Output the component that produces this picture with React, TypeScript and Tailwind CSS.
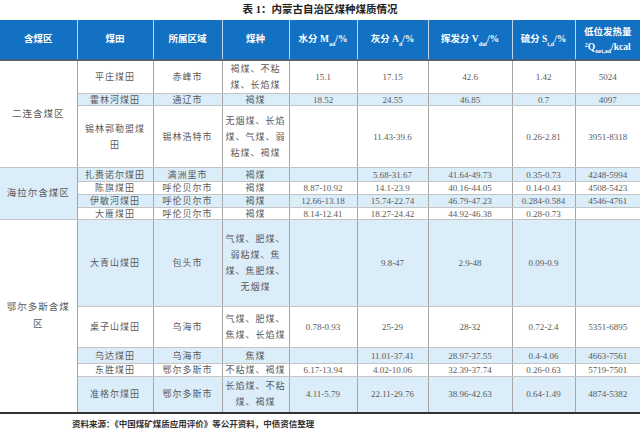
import React from "react";

type Row = {
  field: React.ReactNode;
  city: string;
  kind: React.ReactNode;
  m: string;
  a: string;
  v: string;
  s: string;
  q: string;
  blue: boolean;
  h: string;
};

// 含煤区 cells span several rows
const regions: Record<number, { name: React.ReactNode; span: number; blue: boolean }> = {
  0: { name: "二连含煤区", span: 3, blue: false },
  3: { name: "海拉尔含煤区", span: 4, blue: true },
  7: {
    name: (
      <>
        鄂尔多斯含煤
        <br />区
      </>
    ),
    span: 5,
    blue: false,
  },
};

const rows: Row[] = [
  { field: "平庄煤田", city: "赤峰市", kind: <>褐煤、不粘<br />煤、长焰煤</>, m: "15.1", a: "17.15", v: "42.6", s: "1.42", q: "5024", blue: false, h: "h-[32px]" },
  { field: "霍林河煤田", city: "通辽市", kind: "褐煤", m: "18.52", a: "24.55", v: "46.85", s: "0.7", q: "4097", blue: true, h: "h-[12px]" },
  { field: <>锡林郭勒盟煤<br />田</>, city: "锡林浩特市", kind: <>无烟煤、长焰<br />煤、气煤、弱<br />粘煤、褐煤</>, m: "", a: "11.43-39.6", v: "", s: "0.26-2.81", q: "3951-8318", blue: false, h: "h-[62px]" },
  { field: "扎赉诺尔煤田", city: "满洲里市", kind: "褐煤", m: "", a: "5.68-31.67", v: "41.64-49.73", s: "0.35-0.73", q: "4248-5994", blue: true, h: "h-[14px]" },
  { field: "陈旗煤田", city: "呼伦贝尔市", kind: "褐煤", m: "8.87-10.92", a: "14.1-23.9", v: "40.16-44.05", s: "0.14-0.43", q: "4508-5423", blue: false, h: "h-[13px]" },
  { field: "伊敏河煤田", city: "呼伦贝尔市", kind: "褐煤", m: "12.66-13.18", a: "15.74-22.74", v: "46.79-47.23", s: "0.284-0.584", q: "4546-4761", blue: true, h: "h-[13px]" },
  { field: "大雁煤田", city: "呼伦贝尔市", kind: "褐煤", m: "8.14-12.41", a: "18.27-24.42", v: "44.92-46.38", s: "0.28-0.73", q: "", blue: false, h: "h-[12px]" },
  { field: "大青山煤田", city: "包头市", kind: <>气煤、肥煤、<br />弱粘煤、焦<br />煤、焦肥煤、<br />无烟煤</>, m: "", a: "9.8-47", v: "2.9-48", s: "0.09-0.9", q: "", blue: true, h: "h-[87px]" },
  { field: "桌子山煤田", city: "乌海市", kind: <>气煤、肥煤、<br />焦煤、长焰煤</>, m: "0.78-0.93", a: "25-29", v: "28-32", s: "0.72-2.4", q: "5351-6895", blue: false, h: "h-[41px]" },
  { field: "乌达煤田", city: "乌海市", kind: "焦煤", m: "", a: "11.01-37.41", v: "28.97-37.55", s: "0.4-4.06", q: "4663-7561", blue: true, h: "h-[16px]" },
  { field: "东胜煤田", city: "鄂尔多斯市", kind: "不粘煤、褐煤", m: "6.17-13.94", a: "4.02-10.06", v: "32.39-37.74", s: "0.26-0.63", q: "5719-7501", blue: false, h: "h-[13px]" },
  { field: "准格尔煤田", city: "鄂尔多斯市", kind: <>长焰煤、不粘<br />煤、褐煤</>, m: "4.11-5.79", a: "22.11-29.76", v: "38.96-42.63", s: "0.64-1.49", q: "4874-5382", blue: true, h: "h-[36px]" },
];

function Sub({ children }: { children: React.ReactNode }) {
  return <sub className="text-[6px] align-[-2px] leading-none">{children}</sub>;
}

export default function App() {
  const th = "border-x border-[#c7d7ea] font-bold text-white text-[9.5px] leading-[15px] text-center align-middle px-0";
  const td = "border-x border-[#a6a6a6] border-y border-y-[#c4c4c4] text-center align-middle p-0 leading-[10px]";

  return (
    <div className="w-[640px] h-[429px] overflow-hidden bg-white font-['Liberation_Serif','Noto_Sans_CJK_SC',serif] text-[#5a5a5a]">
      <div className="h-[20px] flex items-center justify-center text-[10.5px] font-bold text-[#222]">
        表 1：内蒙古自治区煤种煤质情况
      </div>
      <table className="w-[640px] table-fixed border-collapse">
        <colgroup>
          <col className="w-[77px]" />
          <col className="w-[76px]" />
          <col className="w-[69px]" />
          <col className="w-[67px]" />
          <col className="w-[68px]" />
          <col className="w-[71px]" />
          <col className="w-[84px]" />
          <col className="w-[63px]" />
          <col className="w-[65px]" />
        </colgroup>
        <thead>
          <tr className="h-[40px] bg-[#1371c3] border-b-2 border-b-[#4f6377]">
            <th className={`${th} border-l-0`}>含煤区</th>
            <th className={th}>煤田</th>
            <th className={th}>所属区域</th>
            <th className={th}>煤种</th>
            <th className={th}>
              水分 M<Sub>ad</Sub>/%
            </th>
            <th className={th}>
              灰分 A<Sub>d</Sub>/%
            </th>
            <th className={th}>
              挥发分 V<Sub>daf</Sub>/%
            </th>
            <th className={th}>
              硫分 S<Sub>t,d</Sub>/%
            </th>
            <th className={`${th} border-r-0`}>
              低位发热量
              <br />
              <sup className="text-[6px] leading-none">2</sup>Q<Sub>net,ad</Sub>/kcal
            </th>
          </tr>
        </thead>
        <tbody className="text-[9px] border-b-2 border-b-[#333]">
          {rows.map((r, i) => {
            const reg = regions[i];
            const bg = r.blue ? "bg-[#dbedf9]" : "bg-white";
            return (
              <tr key={i} className={`${r.h} ${bg}`}>
                {reg && (
                  <td
                    rowSpan={reg.span}
                    className={`${td} border-l-0 tracking-[1px] text-[9.5px] leading-[17px] ${reg.blue ? "bg-[#dbedf9]" : "bg-white"}`}
                  >
                    {reg.name}
                  </td>
                )}
                <td className={`${td} tracking-[1px] ${typeof r.field === "string" ? "" : "leading-[16px]"}`}>{r.field}</td>
                <td className={`${td} tracking-[1px]`}>{r.city}</td>
                <td className={`${td} tracking-[1px] ${typeof r.kind === "string" ? "" : "leading-[16px]"}`}>{r.kind}</td>
                <td className={td}>{r.m}</td>
                <td className={td}>{r.a}</td>
                <td className={td}>{r.v}</td>
                <td className={td}>{r.s}</td>
                <td className={`${td} border-r-0`}>{r.q}</td>
              </tr>
            );
          })}
        </tbody>
      </table>
      <div className="pl-[72px] pt-[4px] text-[8.5px] font-bold text-[#333] leading-[12px]">
        资料来源：《中国煤矿煤质应用评价》等公开资料，中债资信整理
      </div>
    </div>
  );
}
